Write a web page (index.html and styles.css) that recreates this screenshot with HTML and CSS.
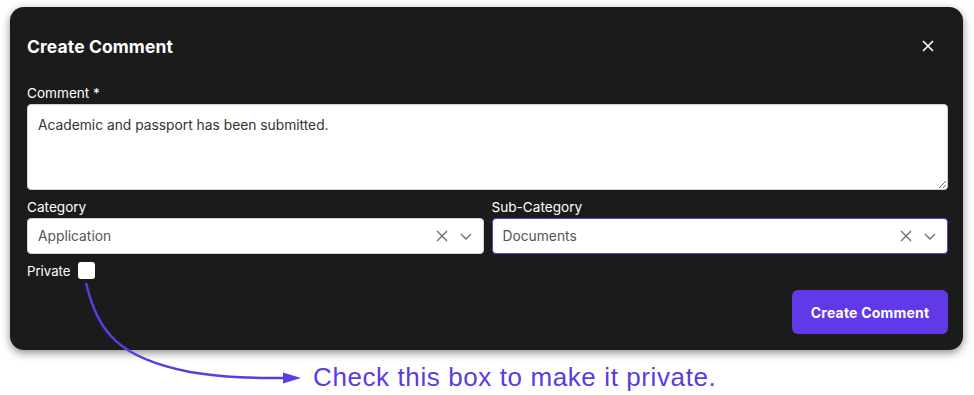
FILE: index.html
```html
<!DOCTYPE html>
<html lang="en">
<head>
  <meta charset="UTF-8">
  <title>Create Comment</title>
  <link rel="stylesheet" href="styles.css">
</head>
<body>
  <div class="page">
    <div class="dialog">
      <div class="dialog-header">
        <div class="dialog-title">Create Comment</div>
        <svg class="close" width="12" height="12" viewBox="0 0 12 12">
          <path d="M1 1L11 11M11 1L1 11" stroke="#fff" stroke-width="1.6" fill="none"/>
        </svg>
      </div>

      <div class="label">Comment *</div>
      <textarea class="textarea">Academic and passport has been submitted.</textarea>

      <div class="fields">
        <div class="field">
          <div class="label">Category</div>
          <div class="select">
            <span class="select-value">Application</span>
            <svg class="clear" width="12" height="12" viewBox="0 0 12 12">
              <path d="M1 1L11 11M11 1L1 11" stroke="#6b6b6b" stroke-width="1.3" fill="none"/>
            </svg>
            <svg class="chevron" width="12" height="7" viewBox="0 0 12 7">
              <path d="M1 1L6 6L11 1" stroke="#6b6b6b" stroke-width="1.3" fill="none"/>
            </svg>
          </div>
        </div>
        <div class="field">
          <div class="label">Sub-Category</div>
          <div class="select focused">
            <span class="select-value">Documents</span>
            <svg class="clear" width="12" height="12" viewBox="0 0 12 12">
              <path d="M1 1L11 11M11 1L1 11" stroke="#6b6b6b" stroke-width="1.3" fill="none"/>
            </svg>
            <svg class="chevron" width="12" height="7" viewBox="0 0 12 7">
              <path d="M1 1L6 6L11 1" stroke="#6b6b6b" stroke-width="1.3" fill="none"/>
            </svg>
          </div>
        </div>
      </div>

      <div class="private-row">
        <span class="private-label">Private</span>
        <span class="checkbox"></span>
      </div>

      <div class="actions">
        <button class="btn-primary">Create Comment</button>
      </div>
    </div>

    <div class="hint">Check this box to make it private.</div>
  </div>

  <!-- annotation arrow, drawn over the dialog -->
  <svg class="arrow" width="974" height="395" viewBox="0 0 974 395">
    <path d="M86 283 C 98 332, 118 358, 190 372 C 225 378, 255 378, 288 378" stroke="#5b3be2" stroke-width="2.5" fill="none"/>
    <polygon points="283,372.5 301,378 283,383.5" fill="#5b3be2"/>
  </svg>
</body>
</html>
```

FILE: styles.css
```css
body {
  margin: 0;
  background: #fff;
  font-family: Inter, "Noto Sans", sans-serif;
  position: relative;
}
.page {
  padding: 7px 11px 0 10px;
}
.dialog {
  background: #1b1b1b;
  border-radius: 14px;
  padding: 28px 15px 16px 17px;
  box-shadow: 0 3px 8px rgba(0, 0, 0, 0.45);
  color: #fff;
}
.dialog-header {
  display: flex;
  justify-content: space-between;
  align-items: center;
  height: 22px;
  margin-bottom: 27px;
}
.dialog-title {
  font-size: 17.5px;
  font-weight: 700;
  letter-spacing: 0.1px;
}
.close {
  margin-right: 14px;
}
.label {
  font-size: 13.6px;
  line-height: 18px;
  margin-bottom: 2px;
}
.textarea {
  display: block;
  width: 100%;
  height: 86px;
  box-sizing: border-box;
  border: 1px solid #cfd4dc;
  border-radius: 4px;
  padding: 12px 10px;
  font-family: Inter, "Noto Sans", sans-serif;
  font-size: 13.8px;
  color: #333;
  resize: vertical;
  margin: 0;
}
.fields {
  display: grid;
  grid-template-columns: 1fr 1fr;
  gap: 8px;
  margin-top: 8px;
}
.select {
  display: flex;
  align-items: center;
  height: 36px;
  box-sizing: border-box;
  background: #fff;
  border: 1px solid #d0d5dd;
  border-radius: 4px;
  padding: 0 11px 0 10px;
}
.select.focused {
  border-color: #5b3be2;
}
.select-value {
  flex: 1;
  font-size: 13.8px;
  color: #555;
}
.clear {
  margin-right: 12px;
}
.private-row {
  display: flex;
  align-items: center;
  gap: 8px;
  margin-top: 8px;
  height: 17px;
}
.private-label {
  font-size: 13.2px;
}
.checkbox {
  width: 17px;
  height: 17px;
  background: #fff;
  border-radius: 3px;
}
.actions {
  display: flex;
  justify-content: flex-end;
  margin-top: 11px;
}
.btn-primary {
  width: 156px;
  height: 44px;
  background: #6139e6;
  border: none;
  border-radius: 6px;
  color: #fff;
  font-family: Inter, "Noto Sans", sans-serif;
  font-size: 14px;
  font-weight: 700;
  letter-spacing: 0.2px;
}
.hint {
  font-family: "Liberation Sans", Arial, sans-serif;
  font-size: 26px;
  letter-spacing: 0.6px;
  color: #5b3be2;
  padding: 12px 0 0 303px;
}
.arrow {
  position: absolute;
  top: 0;
  left: 0;
  pointer-events: none;
}
```
